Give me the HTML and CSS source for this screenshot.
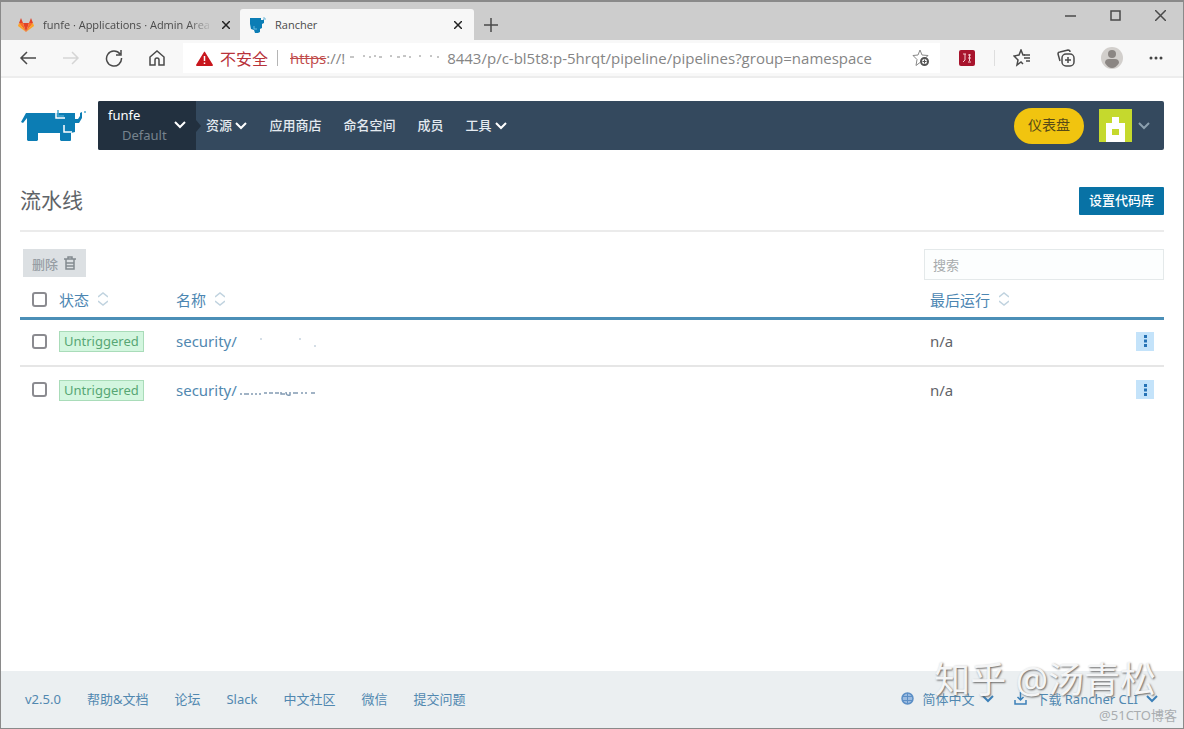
FILE: index.html
```html
<!DOCTYPE html>
<html lang="zh-CN">
<head>
<meta charset="utf-8">
<title>Rancher</title>
<link rel="stylesheet" href="styles.css">
</head>
<body>
<div class="window">
  <header class="titlebar">
    <div class="tab">
      <svg class="tab-icon" width="16" height="16" viewBox="0 0 16 16"><path fill="#e24329" d="M8 15 5 6h6z"/><path fill="#fc6d26" d="M8 15 1 6h4zM8 15l7-9h-4z"/><path fill="#fca326" d="M8 15 0 9l1-3zM8 15l8-6-1-3z"/><path fill="#e24329" d="M1 6 3 1l2 5zM15 6l-2-5-2 5z"/></svg>
      <span class="tab-title faded">funfe · Applications · Admin Area</span>
      <button class="icon-btn" aria-label="关闭标签页"><svg width="8" height="8" viewBox="0 0 8 8"><path class="line dark" d="M0 0 8 8M8 0 0 8"/></svg></button>
    </div>
    <div class="tab active">
      <svg class="tab-icon" width="16" height="16" viewBox="0 0 16 16"><path fill="#0b7db5" d="M0 1h11v2h2l1-1v4l-2 1v4l-2 1v3l-2 1H5l-1-3-3-1-1-5z"/><path fill="none" stroke="#6bb9dd" d="M4 9v3h3M13 1h2v2"/></svg>
      <span class="tab-title">Rancher</span>
      <button class="icon-btn" aria-label="关闭标签页"><svg width="8" height="8" viewBox="0 0 8 8"><path class="line dark" d="M0 0 8 8M8 0 0 8"/></svg></button>
    </div>
    <button class="icon-btn new-tab" aria-label="新标签页"><svg width="14" height="14" viewBox="0 0 14 14"><path class="line" d="M7 0v14M0 7h14"/></svg></button>
    <div class="win-controls">
      <button class="icon-btn" aria-label="最小化"><svg width="11" height="11" viewBox="0 0 11 11"><path class="line" d="M0 6h11"/></svg></button>
      <button class="icon-btn" aria-label="最大化"><svg width="11" height="11" viewBox="0 0 11 11"><path class="line" d="M1 1h9v9H1z"/></svg></button>
      <button class="icon-btn" aria-label="关闭"><svg width="11" height="11" viewBox="0 0 11 11"><path class="line" d="m0 0 11 11M11 0 0 11"/></svg></button>
    </div>
  </header>

  <div class="toolbar">
    <div class="nav-buttons">
      <button class="icon-btn" aria-label="后退"><svg width="18" height="18" viewBox="0 0 18 18"><path class="line" d="M17 9H2M8 3 2 9l6 6"/></svg></button>
      <button class="icon-btn" aria-label="前进" disabled><svg width="18" height="18" viewBox="0 0 18 18"><path class="line pale" d="M1 9h15M10 3l6 6-6 6"/></svg></button>
      <button class="icon-btn" aria-label="刷新"><svg width="18" height="18" viewBox="0 0 18 18"><path class="line" d="M15 5a7.500 7.500 0 1 0 1.500 4M16 1v5h-5"/></svg></button>
      <button class="icon-btn" aria-label="主页"><svg width="18" height="18" viewBox="0 0 18 18"><path class="line" d="M2 8 9 2l7 6v8h-5v-5a2 2 0 0 0-4 0v5H2z"/></svg></button>
    </div>
    <div class="address">
      <svg width="17" height="15" viewBox="0 0 17 15"><path fill="#c8161d" d="M8 1q.5-1 1 0l8 13q0 1-1 1H1q-1 0-1-1z"/><path stroke="#fff" stroke-width="1.500" d="M8.500 5v5M8.500 11.500V13"/></svg>
      <span class="insecure">不安全</span>
      <span class="divider"></span>
      <span class="url"><s>https</s>://!<svg width="102" height="12" viewBox="0 0 102 12"><path fill="none" stroke="#8c8c8c" d="M5 5h4M18 4h2M24 5h2M29 4h2M34 5h3M45 4h2M52 5h3M58 4h3M64 5h2M74 4h2M85 4h2M92 5h2"/></svg>8443/p/c-bl5t8:p-5hrqt/pipeline/pipelines?group=namespace</span>
      <button class="icon-btn fav" aria-label="收藏此页"><svg width="18" height="18" viewBox="0 0 18 18"><path fill="none" stroke="#888" d="m8 1 2 5 6 .5-3 3M8 1 6 6l-5 .5 4 4-1 6 4-3"/><circle cx="12.500" cy="12.500" r="3.500" fill="#fff" stroke="#555" stroke-width="2"/><path stroke="#555" d="M10.500 12.500h4M12.500 10.500v4"/></svg></button>
    </div>
    <div class="tools">
      <button class="icon-btn" aria-label="扩展"><svg width="16" height="16" viewBox="0 0 16 16"><rect width="16" height="16" rx="2" fill="#a8142d"/><path fill="none" stroke="#f5c9cf" d="M4 4h3M6 4v6l-2 2M9 5h3M9 8h3M10.500 4v7M9 12h3"/></svg></button>
      <span class="divider light"></span>
      <button class="icon-btn" aria-label="收藏夹"><svg width="18" height="18" viewBox="0 0 18 18"><path class="line" d="M12 6h-2L8 1 6 6l-5 1 4 4-1 5 4-3 2 2"/><path class="line" d="M11 6h6M11 9h6M13 12h4"/></svg></button>
      <button class="icon-btn" aria-label="集锦"><svg width="18" height="18" viewBox="0 0 18 18"><path class="line" d="M3 12 1 5q0-2 2-2l8-2q2 0 2 2"/><rect class="line" x="5" y="5" width="12" height="12" rx="4"/><path class="line" d="M11 8v6M8 11h6"/></svg></button>
      <button class="icon-btn" aria-label="用户"><svg width="22" height="22" viewBox="0 0 22 22"><circle cx="11" cy="11" r="11" fill="#d2cfcc"/><circle cx="11" cy="7" r="4" fill="#8b8683"/><path fill="#8b8683" d="M4 16q0-4 4-4h6q4 0 4 4-3 5-7 5t-7-5"/></svg></button>
      <button class="icon-btn" aria-label="更多"><svg width="14" height="4" viewBox="0 0 14 4"><g fill="#444"><circle cx="2" cy="2" r="1.500"/><circle cx="7" cy="2" r="1.500"/><circle cx="12" cy="2" r="1.500"/></g></svg></button>
    </div>
  </div>

  <div class="page">
    <nav class="topnav">
      <a class="logo" href="#" aria-label="Rancher"><svg width="66" height="32" viewBox="0 0 66 32"><path fill="#0c7db4" d="M5 3h49v6h3l2-3V3l2-1v6l-3 5h-4v9l-4 1v7q0 1-1 1h-9l-1-1v-7H17v7l-1 1H7l-1-1V8l-4 5-2-1z"/><path fill="none" stroke="#fff" stroke-width="1.500" d="M35 0v8h9M43 15v7h8"/><path fill="none" stroke="#46a7d0" stroke-width="1.500" d="M37 0v6h6M64 1v2"/></svg></a>
      <div class="navbar">
        <button class="project"><span class="names"><span>funfe</span><span class="sub">Default</span></span><svg class="chev" width="12" height="8" viewBox="0 0 12 8"><path d="m1 1 5 5 5-5"/></svg></button>
        <svg width="5" height="12" viewBox="0 0 5 12"><path fill="#22303f" d="m0 0 5 6-5 6z"/></svg>
        <ul class="menu">
          <li><a href="#">资源 <svg class="chev" width="12" height="8" viewBox="0 0 12 8"><path d="m1 1 5 5 5-5"/></svg></a></li>
          <li><a href="#">应用商店</a></li>
          <li><a href="#">命名空间</a></li>
          <li><a href="#">成员</a></li>
          <li><a href="#">工具 <svg class="chev" width="12" height="8" viewBox="0 0 12 8"><path d="m1 1 5 5 5-5"/></svg></a></li>
        </ul>
        <button class="dashboard">仪表盘</button>
        <button class="account" aria-label="账户"><svg width="33" height="33" viewBox="0 0 33 33"><path fill="#c5d92d" d="M0 0h33v33H0z"/><path fill="#fff" d="M7 33V14h6V8h7v6h6v19z"/><path fill="#c5d92d" d="M13 20h7v6h-7z"/></svg><svg class="chev thin" width="12" height="8" viewBox="0 0 12 8"><path d="m1 1 5 5 5-5"/></svg></button>
      </div>
    </nav>

    <main>
      <div class="heading">
        <h1>流水线</h1>
        <button class="primary">设置代码库</button>
      </div>
      <div class="actions">
        <button class="delete" disabled>删除 <svg width="12" height="14" viewBox="0 0 12 14"><path fill="none" stroke="#838a90" stroke-width="1.500" d="M0 3h12M4 3V1h4v2M2 3v10h8V3M2 7h8M2 10h8"/></svg></button>
        <input class="search" type="search" placeholder="搜索" aria-label="搜索">
      </div>
      <table class="grid">
        <colgroup><col class="c-check"><col class="c-state"><col><col class="c-run"><col class="c-menu"></colgroup>
        <thead>
          <tr>
            <th><input type="checkbox" aria-label="全选"></th>
            <th><a href="#">状态 <svg class="sort" width="10" height="14" viewBox="0 0 10 14"><path d="m0 5 5-4 5 4M0 9l5 4 5-4"/></svg></a></th>
            <th><a href="#">名称 <svg class="sort" width="10" height="14" viewBox="0 0 10 14"><path d="m0 5 5-4 5 4M0 9l5 4 5-4"/></svg></a></th>
            <th><a href="#">最后运行 <svg class="sort" width="10" height="14" viewBox="0 0 10 14"><path d="m0 5 5-4 5 4M0 9l5 4 5-4"/></svg></a></th>
            <th></th>
          </tr>
        </thead>
        <tbody>
          <tr>
            <td><input type="checkbox" aria-label="选择第一行"></td>
            <td><span class="badge">Untriggered</span></td>
            <td><a href="#">security/<svg width="82" height="12" viewBox="0 0 82 12"><path fill="none" stroke="#a9bccd" d="M23 4h2M62 4h2M77 11h2"/></svg></a></td>
            <td>n/a</td>
            <td><button class="more" aria-label="操作"><svg width="3" height="12" viewBox="0 0 3 12"><path fill="#2572b5" d="M0 0h3v3H0zM0 4.500h3v3H0zM0 9h3v3H0z"/></svg></button></td>
          </tr>
          <tr>
            <td><input type="checkbox" aria-label="选择第二行"></td>
            <td><span class="badge">Untriggered</span></td>
            <td><a href="#">security/<svg width="82" height="12" viewBox="0 0 82 12"><path fill="none" stroke="#829bb3" stroke-width="1.500" d="M3 10h2M7 10h5M14 10h2M18 10h2M22 10h2M27 9h3M32 9h4M38 9h4M44 8v2h4M49 8q0 4 4 3V8M56 9h5M64 9h2M68 9h2M74 9h4"/></svg></a></td>
            <td>n/a</td>
            <td><button class="more" aria-label="操作"><svg width="3" height="12" viewBox="0 0 3 12"><path fill="#2572b5" d="M0 0h3v3H0zM0 4.500h3v3H0zM0 9h3v3H0z"/></svg></button></td>
          </tr>
        </tbody>
      </table>
    </main>
  </div>

  <footer class="footer">
    <a href="#">v2.5.0</a><a href="#">帮助&amp;文档</a><a href="#">论坛</a><a href="#">Slack</a><a href="#">中文社区</a><a href="#">微信</a><a href="#">提交问题</a>
    <div class="footer-right">
      <a href="#"><svg width="13" height="13" viewBox="0 0 13 13"><circle cx="6.500" cy="6.500" r="5.500" fill="#9bbbe0" stroke="#5c8fc6" stroke-width="1.500"/><path fill="none" stroke="#5c8fc6" d="M1 4.500h11M1 8.500h11M6.500 1v11"/></svg>简体中文<svg class="chev blue" width="12" height="8" viewBox="0 0 12 8"><path d="m1 1 5 5 5-5"/></svg></a>
      <a href="#"><svg width="13" height="13" viewBox="0 0 13 13"><path fill="none" stroke="#3c80b8" stroke-width="1.500" d="M6.500 0v8M3.500 5l3 3 3-3M1 8v4h11V8"/></svg>下载 Rancher CLI<svg class="chev blue" width="12" height="8" viewBox="0 0 12 8"><path d="m1 1 5 5 5-5"/></svg></a>
    </div>
    <span class="mark-large">知乎 @汤青松</span>
    <span class="mark-small">@51CTO博客</span>
  </footer>
</div>
</body>
</html>
```
FILE: styles.css
```css
* { box-sizing: border-box; }

body {
  margin: 0;
  font-family: "Noto Sans", "Noto Sans CJK SC", sans-serif;
  font-size: 14px;
  color: #5f6469;
}

a { color: #5188b0; text-decoration: none; }
button { font: inherit; border: 0; cursor: pointer; }
svg { flex: none; }

.window {
  min-height: 100vh;
  display: flex;
  flex-direction: column;
  border: 1px solid #8a8a8a;
  border-top: 2px solid #8a8a8a;
  background: #fff;
}

.icon-btn {
  display: flex;
  align-items: center;
  justify-content: center;
  padding: 0;
  background: none;
}
.line { fill: none; stroke: #4a4a4a; stroke-width: 1.5; }
.dark { stroke: #222; }
.pale { stroke: #d5d5d5; }

/* Browser chrome */
.titlebar {
  display: flex;
  height: 38px;
  background: #cdcdcd;
}
.tab {
  display: flex;
  align-items: center;
  gap: 9px;
  width: 239px;
  padding: 0 10px 0 17px;
  margin-top: 7px;
  font-family: "Open Sans", "Noto Sans", sans-serif;
  font-size: 11px;
  color: #4a4a4a;
}
.tab.active {
  width: 234px;
  padding: 0 12px 0 10px;
  border-radius: 3px 3px 0 0;
  background: #f7f7f7;
}
.tab-title { flex: 1; overflow: hidden; white-space: nowrap; }
.faded { mask-image: linear-gradient(90deg, #000 85%, transparent); }
.new-tab { margin: 7px 0 0 10px; }
.win-controls {
  display: flex;
  align-items: center;
  gap: 34px;
  height: 26px;
  margin-left: auto;
  padding-right: 17px;
}

.toolbar {
  display: flex;
  align-items: center;
  height: 38px;
  background: #f8f8f8;
  border-bottom: 2px solid #ededed;
}
.nav-buttons { display: flex; gap: 25px; padding: 0 17px 0 18px; }
.address {
  flex: 1;
  display: flex;
  align-items: center;
  height: 30px;
  padding: 0 10px 0 13px;
  background: #fff;
  white-space: nowrap;
}
.insecure { margin: 0 9px 0 7px; font-size: 16px; color: #b8333b; }
.divider { width: 1px; height: 16px; background: #b5b5b5; }
.light { background: #dedede; }
.url {
  margin-left: 12px;
  font-family: "Open Sans", sans-serif;
  font-size: 15px;
  color: #858585;
}
.url s { color: #c04a4a; }
.fav { margin-left: auto; }
.tools { display: flex; align-items: center; gap: 26px; padding: 0 20px 0 19px; }
.tools .divider { margin: 0 -8px 0 -7px; }

/* Page */
.page { flex: 1; padding: 23px 19px 0; }
.topnav { display: flex; align-items: center; }
.logo { display: flex; width: 78px; padding: 0 0 0 1px; }
.navbar {
  flex: 1;
  display: flex;
  align-items: center;
  height: 49px;
  border-radius: 2px;
  background: #34495e;
  color: #fff;
}
.project {
  display: flex;
  align-items: center;
  justify-content: space-between;
  width: 98px;
  height: 49px;
  padding: 0 10px 2px;
  border-radius: 2px 0 0 2px;
  background: #22303f;
  color: #fff;
  font-size: 13px;
  line-height: 20px;
  text-align: left;
}
.names { display: flex; flex-direction: column; }
.sub { padding-left: 14px; color: #77838e; }
.chev { fill: none; stroke: #fff; stroke-width: 2; }
.chev.thin { stroke: #8b9fae; }
.chev.blue { stroke: #3c80b8; }
.menu {
  display: flex;
  gap: 22px;
  margin: 0;
  padding: 0 0 3px 5px;
  list-style: none;
  font-size: 13px;
  font-weight: 500;
}
.menu a { color: #e4eaf0; }
.dashboard {
  margin-left: auto;
  width: 70px;
  height: 36px;
  padding: 0 0 3px;
  border-radius: 18px;
  background: #f1c40f;
  color: #574a17;
}
.account {
  display: flex;
  align-items: center;
  gap: 6px;
  padding: 0 14px 0 15px;
  background: none;
}

.heading {
  display: flex;
  align-items: center;
  justify-content: space-between;
  margin-top: 21px;
  height: 61px;
  border-bottom: 2px solid #ebebeb;
}
h1 {
  margin: 0;
  padding-bottom: 3px;
  font-size: 21px;
  font-weight: 400;
}
.primary {
  height: 28px;
  padding: 0 10px 2px;
  border-radius: 1px;
  background: #0872a5;
  color: #fff;
  font-size: 13px;
  font-weight: 500;
}
.actions {
  display: flex;
  justify-content: space-between;
  margin-top: 17px;
  padding-left: 3px;
}
.delete {
  display: flex;
  align-items: center;
  gap: 6px;
  height: 28px;
  padding: 0 10px 0 9px;
  background: #dce0e3;
  color: #969da3;
  font-size: 13px;
  font-weight: 500;
}
.search {
  width: 240px;
  height: 31px;
  padding: 0 8px;
  border: 1px solid #e4e9ea;
  background: #fcfefe;
  font: inherit;
  font-size: 13px;
}
.search::placeholder { color: #a7abad; }

.grid { width: 100%; border-collapse: collapse; table-layout: fixed; font-size: 15px; }
.c-check { width: 39px; }
.c-state { width: 117px; }
.c-run { width: 206px; }
.c-menu { width: 28px; }
.grid th, .grid td { padding: 0; text-align: left; font-weight: 400; }
.grid th { height: 38px; padding-top: 2px; border-bottom: 3px solid #4b8fb7; }
.grid td { height: 48px; padding-bottom: 2px; }
.grid tbody tr + tr td { border-top: 2px solid #e6e6e6; }
.grid input {
  appearance: none;
  display: block;
  width: 15px;
  height: 15px;
  margin: 0 0 0 12px;
  border: 2px solid #8b8b90;
  border-radius: 3px;
  background: #fff;
}
.grid th a { display: flex; align-items: center; gap: 9px; color: #4c86b2; }
.sort { fill: none; stroke: #c0d3df; stroke-width: 1.5; }
.badge {
  display: inline-block;
  padding: 0 4px;
  border: 1px solid #a9dcb9;
  background: #d3f6df;
  color: #57a674;
  font-size: 13px;
  line-height: 19px;
}
.more {
  display: flex;
  align-items: center;
  justify-content: center;
  width: 18px;
  height: 19px;
  padding: 0;
  background: #c4e3fa;
}

.footer {
  position: relative;
  display: flex;
  align-items: center;
  gap: 26px;
  height: 57px;
  padding: 0 25px 2px 24px;
  background: #ebeff1;
  font-size: 13px;
  white-space: nowrap;
}
.footer-right { display: flex; gap: 20px; margin-left: auto; }
.footer-right a { display: flex; align-items: center; gap: 8px; }
.mark-large {
  position: absolute;
  right: 27px;
  bottom: 24px;
  font-size: 36px;
  line-height: 48px;
  color: #f4f5f6;
  text-shadow: 1px 1px 2px #666;
}
.mark-small {
  position: absolute;
  right: 6px;
  bottom: 4px;
  font-size: 13px;
  line-height: 18px;
  color: #a9adb0;
}
```
